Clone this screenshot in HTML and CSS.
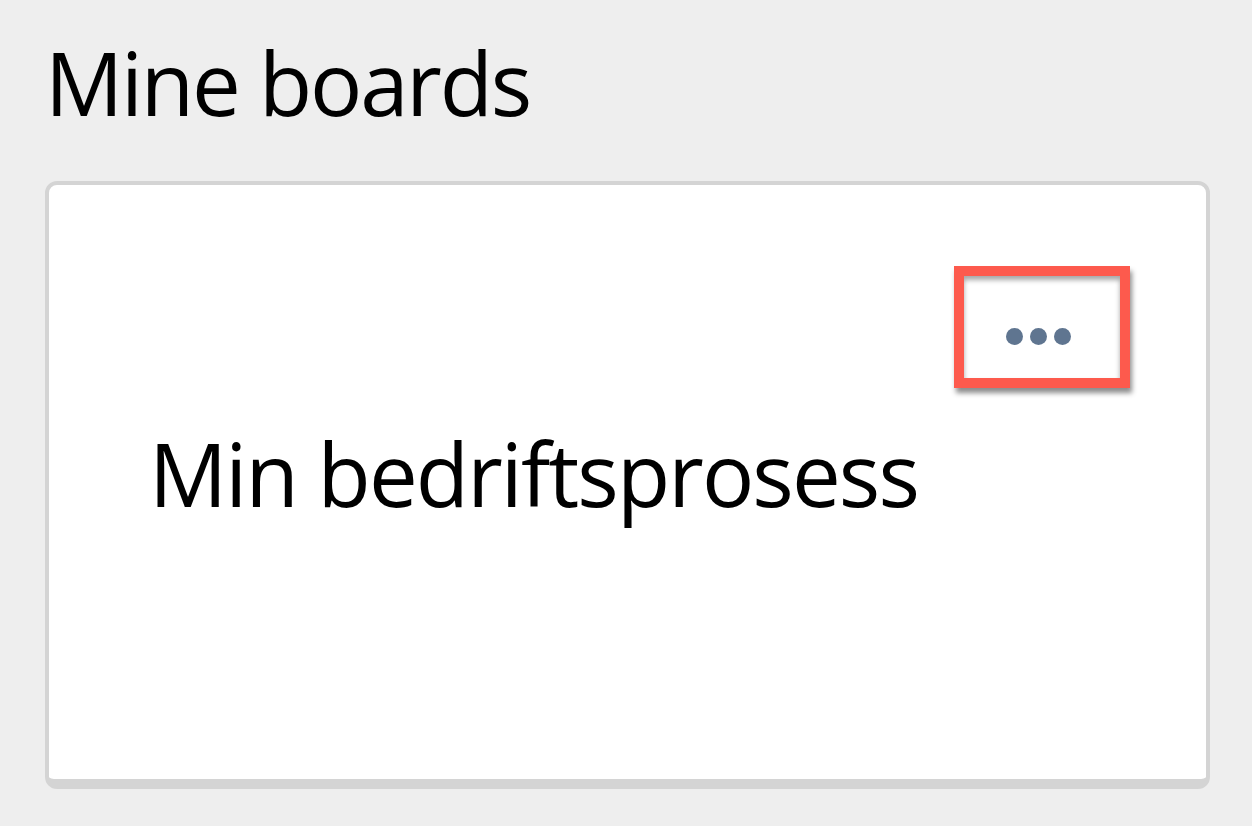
FILE: index.html
```html
<!DOCTYPE html>
<html lang="no">
<head>
<meta charset="utf-8">
<title>Mine boards</title>
<link rel="stylesheet" href="styles.css">
</head>
<body>
<main class="page">
  <h1 class="title">Mine boards</h1>
  <section class="card">
    <div class="card-head">
      <div class="menu-highlight">
        <span class="dot"></span><span class="dot"></span><span class="dot"></span>
      </div>
    </div>
    <div class="card-name">Min bedriftsprosess</div>
  </section>
</main>
</body>
</html>
```
FILE: styles.css
```css
html, body {
  margin: 0;
  padding: 0;
  background: #eeeeee;
  height: 100%;
}
body {
  font-family: "Open Sans", "Noto Sans", sans-serif;
  color: #000;
  overflow: hidden;
}
.page {
  padding: 22px 0 0 45px;
}
.title {
  margin: 0;
  font-size: 87px;
  font-weight: 400;
  line-height: 120px;
  letter-spacing: -2.2px;
}
.card {
  margin-top: 39px;
  box-sizing: border-box;
  width: 1165px;
  height: 608px;
  background: #fff;
  border: 4px solid #d4d4d4;
  border-bottom-width: 10px;
  border-radius: 12px;
  padding: 81px 76px 0 100px;
}
.card-head {
  display: flex;
  justify-content: flex-end;
}
.menu-highlight {
  box-sizing: border-box;
  width: 176px;
  height: 122px;
  border: 10px solid #fd5a4d;
  box-shadow: 2px 5px 5px rgba(0, 0, 0, 0.45), inset 0 4px 5px rgba(0, 0, 0, 0.35);
  display: flex;
  align-items: center;
  justify-content: center;
  gap: 7px;
  padding: 18px 8px 0 0;
}
.dot {
  width: 17px;
  height: 17px;
  border-radius: 50%;
  background: #5f7590;
}
.card-name {
  margin-top: 25px;
  font-size: 87px;
  line-height: 120px;
  letter-spacing: -1.9px;
}
```
